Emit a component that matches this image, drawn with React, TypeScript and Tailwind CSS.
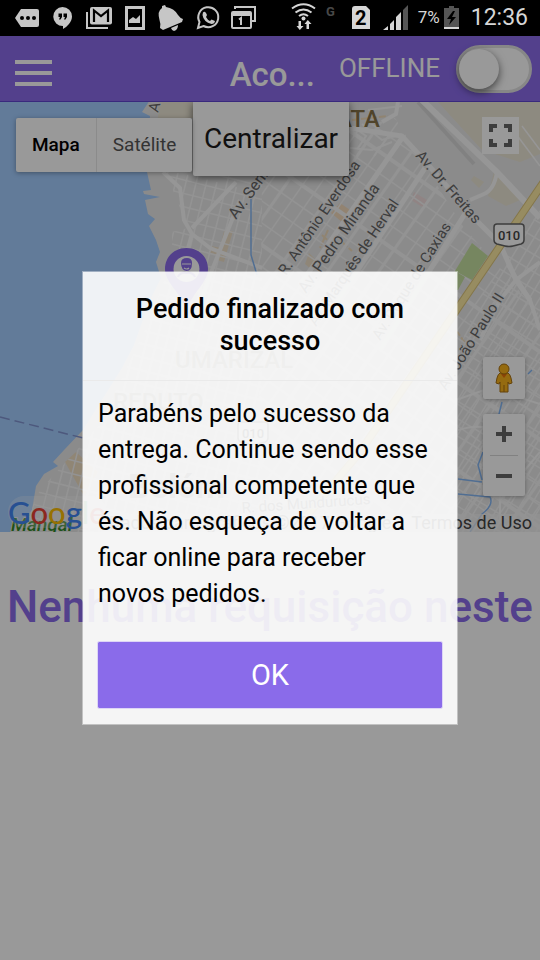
import React from "react";

type Label = { x: number; y: number; angle: number; text: string; size?: number };

const range = (from: number, to: number, step: number): number[] => {
  const out: number[] = [];
  for (let v = from; v <= to; v += step) out.push(v);
  return out;
};

const streetLabels: Label[] = [
  { x: 236, y: 220, angle: -54, text: "Av. Sen. Lemos", size: 16 },
  { x: 286, y: 276, angle: -56, text: "R. Antônio Everdosa" },
  { x: 306, y: 294, angle: -55, text: "Av. Pedro Miranda", size: 16 },
  { x: 316, y: 327, angle: -56, text: "Av. Marquês de Herval" },
  { x: 380, y: 341, angle: -58, text: "Av. Duque de Caxias" },
  { x: 415, y: 156, angle: 49, text: "Av. Dr. Freitas" },
  { x: 446, y: 391, angle: -58, text: "Av. João Paulo II" },
  { x: 242, y: 513, angle: -4, text: "R. dos Mundurucus" },
];

const COAST =
  "M150 100 L142 112 L150 116 L147 172 L151 190 L143 191 L144 194 L160 197 L145 200 L148 214 L155 219 L149 226 L156 240 L160 252 L156 262 L161 278 L150 300 L134 345 L122 368 L83 430 L64 450 L53 462 L58 466 L44 474 L36 486 L32 510 L10 534 L540 534 L540 100 Z";

function Shield({ x, y }: { x: number; y: number }) {
  return (
    <g transform={`translate(${x} ${y})`}>
      <path
        d="M-12 -11 H12 Q15 -11 15 -8 V5 Q15 8 12 9 L4 11 Q0 12 -4 11 L-12 9 Q-15 8 -15 5 V-8 Q-15 -11 -12 -11 Z"
        fill="#fff"
        stroke="#666"
        strokeWidth="1.5"
      />
      <text textAnchor="middle" y="5" fontSize="13" fontWeight="500" fill="#444">010</text>
    </g>
  );
}

function MapDrawing() {
  return (
    <svg
      viewBox="0 102 540 430"
      preserveAspectRatio="xMidYMid slice"
      className="block h-full w-full font-[Roboto,sans-serif]"
      role="img"
      aria-label="Mapa de Belém"
    >
      <defs>
        <clipPath id="land"><path d={COAST} /></clipPath>
        <clipPath id="center">
          <path d="M262 178 L350 130 L395 118 L462 225 L540 315 V534 H258 Z" />
        </clipPath>
        <clipPath id="west">
          <path d="M165 170 L192 176 L262 176 V534 H20 L40 490 L100 425 L150 320 L172 260 L172 232 L188 228 Z" />
        </clipPath>
        <clipPath id="east"><path d="M478 300 L540 210 V534 H455 V360 Z" /></clipPath>
      </defs>
      <rect y="102" width="540" height="430" fill="#a3cdff" />
      <path d={COAST} fill="#e8e8e8" />
      <g clipPath="url(#land)">
        <path d="M158 102 H194 V118 H158 Z M438 102 H540 V154 L520 162 L482 150 Z" fill="#ece6d5" />
        <path d="M494 172 L520 200 L506 206 L488 196 Z M474 176 L484 182 L479 188 L471 180 Z" fill="#ece6d5" />
        <path d="M65 462 L76 452 L98 472 L84 496 Z" fill="#f0dfc4" />
        <path d="M340 203 L353 212 L342 222 L331 213 Z" fill="#f3dbbd" />
        <path d="M414 192 L430 202 L424 208 L411 200 Z" fill="#f0dcdc" />
        <path d="M224 231 L233 231 L224 262 L217 260 Z M211 246 L221 248 L218 255 L210 253 Z M309 253 L318 262 L313 271 L305 264 Z" fill="#efe0c8" />
        <path d="M322 235 L338 250 M342 242 L352 251 M328 230 L320 248 M456 330 L470 350 M352 120 L388 116" stroke="#f1dcbc" strokeWidth="2" strokeDasharray="7 2" fill="none" />

        <g clipPath="url(#west)" stroke="#f6f6f6" strokeWidth="1.5" fill="none">
          <g transform="rotate(14 200 250)">
            {range(60, 320, 10).map((x, i) => (
              <path key={x} d={`M${x} ${i % 3 ? 180 : 100} V560`} />
            ))}
            {range(160, 580, 13).map((y) => (
              <path key={y} d={`M20 ${y} H340`} />
            ))}
          </g>
        </g>
        <g clipPath="url(#center)" stroke="#f5f5f5" fill="none">
          <g transform="rotate(-55 360 260)">
            {range(30, 560, 14).map((y, i) => (
              <path key={y} d={`M60 ${y} H700`} strokeWidth={i % 3 === 0 ? 3 : 1.5} />
            ))}
            {range(100, 640, 18).map((x, i) => (
              <path key={x} d={`M${x} ${i % 2 ? 30 : 0} V600`} strokeWidth={i % 4 === 0 ? 4 : 1.5} />
            ))}
          </g>
        </g>
        <g clipPath="url(#east)" stroke="#f6f6f6" strokeWidth="1.5" fill="none">
          <g transform="rotate(31 500 380)">
            {range(330, 700, 9).map((x) => (
              <path key={x} d={`M${x} 180 V600`} />
            ))}
            {range(180, 600, 15).map((y) => (
              <path key={y} d={`M330 ${y} H700`} />
            ))}
          </g>
        </g>

        <path d="M355 128 L366 136 L358 148 M362 124 L382 140 L402 134 M350 148 L372 150 L392 142 M368 110 L402 106 M374 156 L390 134" stroke="#f7f7f7" strokeWidth="2" fill="none" />
        <path d="M418 102 L474 164" stroke="#d8d8d8" strokeWidth="4" />
        <g stroke="#fafafa" fill="none">
          <path d="M422 100 L497 172 L540 218" strokeWidth="6" />
          <path d="M350 128 L402 136 L424 160 L478 222 L500 244 L516 280 L530 300" strokeWidth="5" />
          <path d="M398 102 L396 114 L382 122 M497 172 Q494 190 484 194 L470 200" strokeWidth="4" />
          <path d="M402 138 L300 285 M425 168 L330 312 M466 212 L380 350" strokeWidth="5" />
          <path d="M163 172 L180 188 L184 220 L192 234 L210 248 L262 268" strokeWidth="4" />
          <path d="M192 234 L184 262 M192 228 L236 182 M240 200 L212 270 L190 330" strokeWidth="4" />
          <path d="M540 262 L516 280 L500 300 L480 340 M508 265 L530 300 L540 330" strokeWidth="4" />
          <path d="M456 400 L490 388 L540 404 M458 430 Q492 420 500 440 V520 M540 452 L500 500" strokeWidth="2" />
          <path d="M522 126 L540 150 M516 134 L540 166" strokeWidth="1.5" />
        </g>
        <path d="M472 243 L488 256 L472 280 L455 271 Z" fill="#c5e0a0" />
        <path d="M455 271 L465 277 L458 290 L455 290 Z" fill="#c5e0a0" />
        <path d="M545 180 L360 452 L270 560" stroke="#dcc57c" strokeWidth="8" fill="none" />
        <path d="M545 180 L360 452 L270 560" stroke="#fce9a2" strokeWidth="6" fill="none" />
        <path d="M251 196 V255 L257 275 M532 370 L528 374 M502 402 L498 418 M483 452 L478 465 L482 480 M458 479 L482 482 M458 494 L490 497 Q494 505 482 514 L470 532" stroke="#86b7f3" strokeWidth="1.5" fill="none" />
      </g>
      <path d="M0 417 L83 438" stroke="#8093d0" strokeWidth="1.5" strokeDasharray="10 5" />

      <g fill="#666" stroke="#ececec" strokeWidth="2" paintOrder="stroke">
        {streetLabels.map((l) => (
          <text key={l.text} fontSize={l.size ?? 15} transform={`translate(${l.x} ${l.y}) rotate(${l.angle})`}>
            {l.text}
          </text>
        ))}
        <text fontSize="15" transform="translate(158 113) rotate(-75)">Av.</text>
      </g>
      <g fill="#857248" fontWeight="500">
        <text x="380" y="127" textAnchor="end" fontSize="24">PRATA</text>
        <g fill="#a39c8c">
          <text x="175" y="368" fontSize="24">UMARIZAL</text>
          <text x="113" y="410" fontSize="24">REDUTO</text>
        </g>
      </g>
      <text x="128" y="498" fontSize="34" fontWeight="700" fill="#777">Belém</text>
      <text x="11" y="531" fontSize="19" fontStyle="italic" fontWeight="500" fill="#33862b" stroke="#e8e8e8" strokeWidth="2" paintOrder="stroke">Mangal</text>
      <Shield x={509} y={235} />
      <Shield x={253} y={433} />

      <path d="M186.500 248 C174 248 165 257 165 269 C165 283 181 292 186.500 311 C192 292 208 283 208 269 C208 257 199 248 186.500 248 Z" fill="#8a6bea" />
      <circle cx="186.500" cy="269" r="13" fill="#fff" />
      <path d="M181 263 Q181 258 187 258 Q192 258 192 263 Q192 271 186.500 271 Q181 270 181 263 Z" fill="#8a6bea" />
      <path d="M182 264 H191 M184 268 Q187 270 189 268" stroke="#fff" strokeWidth="1.2" fill="none" />
      <path d="M178 277 Q180 272 186.500 273 Q193 272 195 277" stroke="#8a6bea" strokeWidth="2" fill="none" />
    </svg>
  );
}

function NotificationIcons() {
  return (
    <svg width="270" height="36" viewBox="0 0 270 36" fill="#c6c6c6" aria-hidden="true">
      <path d="M21 9 H37 Q39 9 39 11 V25 Q39 27 37 27 H21 L15 18 Z" />
      <g fill="#000"><circle cx="22" cy="18" r="2" /><circle cx="28" cy="18" r="2" /><circle cx="34" cy="18" r="2" /></g>
      <path d="M62.500 7 A9.500 9.500 0 0 1 72 16.500 C72 22 67 27 63 29 V26 A9.500 9.500 0 0 1 62.500 7 Z" />
      <path d="M58.500 13.500 H62 V17 L60.500 19.500 H59 L60 17 H58.500 Z M63.500 13.500 H67 V17 L65.500 19.500 H64 L65 17 H63.500 Z" fill="#000" />
      <path d="M87 12 V28 H108" fill="none" stroke="#c6c6c6" strokeWidth="2" />
      <rect x="90" y="7" width="22" height="17.500" rx="2" />
      <path d="M94 22 V10.500 L101 16 L108 10.500 V22" fill="none" stroke="#000" strokeWidth="2.200" />
      <path fillRule="evenodd" d="M125 6 H145 V30 H125 Z M128 9 V27 H142 V9 Z" />
      <path d="M129 23 V20 L133 17 L136 19 L140 15 V23 Z" />
      <path d="M162 6 L165 5 L166 7 Q174 8 178 15 Q180 18 183 19 L182 22 L163 30 L160 28 Q161 24 159.500 20 Q157 11 162 8 Z M171 28 L178 25 Q178 30 174 31 Q172 31 171 28 Z" />
      <path d="M198 28 L199.500 22 A10 10 0 1 1 203.500 26 Z" fill="none" stroke="#c6c6c6" strokeWidth="2" />
      <path d="M203 12.500 Q204.500 11 206 13 L207 15 L206 17 Q207.500 20 210 21 L211.500 19.500 L215 21 Q214.500 24 211.500 24 Q203.500 22 202.500 15 Z" />
      <path d="M235 9 V7 H255 V21 H252" fill="none" stroke="#c6c6c6" strokeWidth="2" />
      <path fillRule="evenodd" d="M233 11 H250 Q252 11 252 13 V27 Q252 29 250 29 H233 Q231 29 231 27 V13 Q231 11 233 11 Z M233 16 V27 H250 V16 Z" />
      <path d="M239 19.500 L241 18 V25" fill="none" stroke="#c6c6c6" strokeWidth="2" />
    </svg>
  );
}

function SignalIcons() {
  return (
    <svg width="122" height="36" viewBox="288 0 122 36" fill="#d6d6d6" aria-hidden="true">
      <g fill="none" stroke="#d6d6d6" strokeWidth="2">
        <path d="M292 8.500 Q303.500 0 315 8.500" />
        <path d="M295.500 12.500 Q303.500 6.500 311.500 12.500" />
        <path d="M299 16 Q303.500 12.500 308 16" />
      </g>
      <circle cx="303.500" cy="18.500" r="2" />
      <path d="M298.500 21 H301 V26 H303.500 L299.800 30 L296.500 26 H298.500 Z M306.500 29 H309 V24 H311.500 L307.800 20 L304.500 24 H306.500 Z" />
      <text x="326" y="16" fontSize="13" fontWeight="700" fill="#484848">G</text>
      <path d="M352 9 Q352 6 355 6 H366 L370 10 V29 H352 Z" />
      <text x="355" y="25" fontSize="20" fontWeight="700" fill="#000">2</text>
      <path d="M383 30 L388 26 V30 Z M390 24 L394 20 V30 H390 Z M396 17 L401 12 V30 H396 Z" />
      <path d="M403 10 L408 5 V30 H403 Z" fill="#555" />
    </svg>
  );
}

function StatusBar() {
  return (
    <div className="flex h-9 shrink-0 items-center justify-between bg-black pr-3 text-[#d6d6d6]">
      <NotificationIcons />
      <div className="flex items-center">
        <SignalIcons />
        <span className="ml-2 text-[17px]">7%</span>
        <svg width="15" height="24" viewBox="0 0 15 24" className="ml-1" aria-hidden="true">
          <path d="M5 0 H10 V2 H15 V23 H0 V2 H5 Z" fill="#555" />
          <path d="M9 5 L3 13 H7 L5 19 L12 11 H8 L11 5 Z" fill="#000" />
          <path d="M0 21 H15 V23 H0 Z" fill="#d6d6d6" />
        </svg>
        <span className="ml-3 text-[23px]">12:36</span>
      </div>
    </div>
  );
}

function Header() {
  return (
    <header className="flex h-[66px] shrink-0 items-center border-b border-[#6045d0] bg-[#8a6bea] pr-2 pl-[15px] text-white">
      <button type="button" aria-label="Menu" className="mt-2 flex w-[37px] shrink-0 flex-col gap-[7px]">
        <span className="h-1 bg-white" />
        <span className="h-1 bg-white" />
        <span className="h-1 bg-white" />
      </button>
      <h1 className="flex-1 pt-3 text-right text-[33px] font-medium">Aco...</h1>
      <label className="ml-6 flex shrink-0 items-center gap-4 text-[26px]">
        OFFLINE
        <input type="checkbox" role="switch" className="sr-only" />
        <span className="flex h-12 w-[76px] items-center rounded-full border-3 border-[#e2e2e2] bg-white">
          <span className="size-10 rounded-full bg-white shadow-[0_3px_8px_rgba(0,0,0,0.6)]" />
        </span>
      </label>
    </header>
  );
}

const googleLetters: [string, string][] = [
  ["G", "text-[#4285f4]"],
  ["o", "text-[#ea4335]"],
  ["o", "text-[#fbbc05]"],
  ["g", "text-[#4285f4]"],
  ["l", "text-[#34a853]"],
  ["e", "text-[#ea4335]"],
];

function MapPanel() {
  return (
    <section className="relative h-[430px] shrink-0 overflow-hidden">
      <MapDrawing />
      <button type="button" className="absolute top-0 left-[193px] h-[74px] rounded-b-xs bg-white px-[11px] text-[28px] text-[#1c1c1c] shadow-[0_2px_8px_rgba(0,0,0,0.6)]">
        Centralizar
      </button>
      <div className="absolute top-4 left-4 flex h-[54px] rounded-xs bg-white text-[19px] shadow-[0_1px_5px_rgba(0,0,0,0.35)]">
        <button type="button" className="px-4 font-medium text-black">Mapa</button>
        <button type="button" className="border-l border-[#e8e8e8] px-4 text-[#565656]">Satélite</button>
      </div>
      <button type="button" aria-label="Tela cheia" className="absolute top-[15px] right-[21px] flex size-[37px] items-center justify-center bg-white">
        <svg width="23" height="23" viewBox="0 0 23 23" fill="none" stroke="#666" strokeWidth="4">
          <path d="M2 8 V2 H8 M15 2 H21 V8 M21 15 V21 H15 M8 21 H2 V15" />
        </svg>
      </button>
      <button type="button" aria-label="Street View" className="absolute top-[255px] right-[15px] flex size-[42px] items-center justify-center rounded-xs bg-white shadow-[0_1px_4px_rgba(0,0,0,0.3)]">
        <svg width="18" height="30" viewBox="0 0 18 30" fill="#f9b21c" stroke="#a86f10" strokeWidth="1">
          <path d="M5 10 H13 Q15 11 16 15 L17 20 L14 21 L13 19 V29 H5 V19 L4 21 L1 20 L2 15 Q3 11 5 10 Z" />
          <path d="M6 11 H12 L9 15 Z" fill="#e8710a" stroke="none" />
          <path d="M9 22 V29" />
          <circle cx="9" cy="6" r="5" />
        </svg>
      </button>
      <div className="absolute top-[312px] right-[15px] flex h-[82px] w-[42px] flex-col items-center rounded-xs bg-white shadow-[0_1px_4px_rgba(0,0,0,0.3)]">
        <button type="button" aria-label="Aumentar zoom" className="flex w-full flex-1 items-center justify-center">
          <svg width="16" height="16" viewBox="0 0 16 16" stroke="#666" strokeWidth="4"><path d="M0 8 H16 M8 0 V16" /></svg>
        </button>
        <span className="h-px w-7 bg-[#d8d8d8]" />
        <button type="button" aria-label="Diminuir zoom" className="flex w-full flex-1 items-center justify-center">
          <svg width="16" height="4" viewBox="0 0 16 4" fill="#666"><path d="M0 0 H16 V4 H0 Z" /></svg>
        </button>
      </div>
      <div className="absolute right-0 bottom-0 flex h-[18px] items-center gap-5 bg-[#f5f5f5]/70 pr-2 pl-2 text-lg whitespace-nowrap text-[#444]">
        <span>Dados cartográficos ©2017 Google</span>
        <a href="#termos">Termos de Uso</a>
      </div>
      <a href="#google" className="absolute bottom-1 left-2 font-[Lato,sans-serif] text-[31px] leading-8 font-medium">
        <span aria-hidden="true" className="absolute inset-0 rounded-full bg-white/25" />
        <span className="relative">
          {googleLetters.map(([letter, color], i) => (
            <span key={i} className={color}>{letter}</span>
          ))}
        </span>
      </a>
    </section>
  );
}

function OrderDialog() {
  return (
    <div className="absolute inset-0 flex items-center justify-center bg-black/40">
      <div role="dialog" aria-modal="true" aria-labelledby="dialog-title" className="w-[376px] max-w-full border border-white/40 bg-white/90 bg-clip-padding text-black">
        <h2 id="dialog-title" className="border-b border-[#eaeaea] px-4 pt-[21px] pb-[23px] text-center text-[27px] leading-8 font-medium">
          Pedido finalizado com sucesso
        </h2>
        <p className="pt-[15px] pr-[22px] pl-[15px] text-[25px] leading-9">
          Parabéns pelo sucesso da entrega. Continue sendo esse profissional competente que és. Não esqueça de voltar a ficar online para receber novos pedidos.
        </p>
        <div className="px-[14px] pt-[29px] pb-[15px]">
          <button type="button" className="h-[68px] w-full rounded-xs border border-[#ddd5f6] bg-[#8a6bea] bg-clip-padding pt-px text-[29px] text-white">
            OK
          </button>
        </div>
      </div>
    </div>
  );
}

export default function App() {
  return (
    <div className="flex min-h-screen flex-col bg-white font-[Roboto,sans-serif]">
      <StatusBar />
      <div className="relative flex flex-1 flex-col">
        <Header />
        <MapPanel />
        <main className="pt-[49px] text-center text-[44px] leading-[53px] font-medium text-[#8a6bea]">
          <p>Nenhuma requisição neste momento</p>
        </main>
        <OrderDialog />
      </div>
    </div>
  );
}
